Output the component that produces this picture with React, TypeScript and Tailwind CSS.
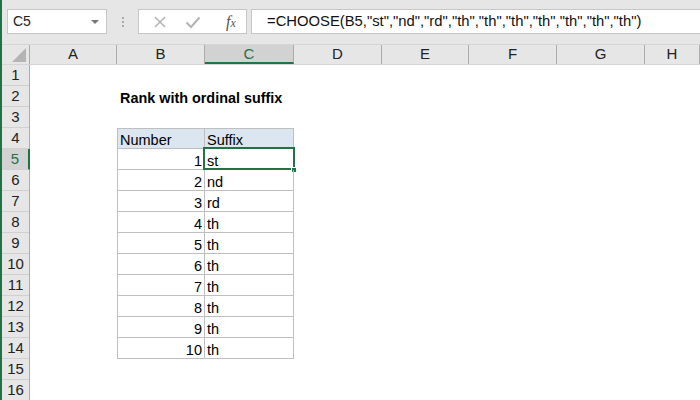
import React from "react";

const cols = [
  { l: "A", w: 87 },
  { l: "B", w: 88 },
  { l: "C", w: 89 },
  { l: "D", w: 88 },
  { l: "E", w: 87 },
  { l: "F", w: 88 },
  { l: "G", w: 88 },
  { l: "H", w: 55 },
];

const suffixes = ["st", "nd", "rd", "th", "th", "th", "th", "th", "th", "th"];

function Cell({ row, col }: { row: number; col: number }) {
  const inTable = row >= 4 && row <= 14 && (col === 1 || col === 2);
  const isHeader = row === 4 && inTable;
  let cls = "relative h-[21px] flex items-end pb-[1px] text-[14.5px] text-black leading-none";
  if (inTable) {
    cls += " border-b border-r border-[#bfbfbf]";
    if (col === 1) cls += " border-l";
    if (row === 4) cls += " border-t";
  }
  if (isHeader) cls += " bg-[#dce6f1]";
  let content: React.ReactNode = null;
  if (row === 2 && col === 1) {
    content = (
      <span className="absolute left-[3px] bottom-[2px] whitespace-nowrap font-bold text-[14.4px]">
        Rank with ordinal suffix
      </span>
    );
  } else if (isHeader) {
    content = <span className="pl-[2px]">{col === 1 ? "Number" : "Suffix"}</span>;
  } else if (inTable && col === 1) {
    content = <span className="w-full text-right pr-[2px]">{row - 4}</span>;
  } else if (inTable && col === 2) {
    content = <span className="pl-[2px]">{suffixes[row - 5]}</span>;
  }
  return (
    <div className={cls}>
      {content}
      {row === 5 && col === 2 && (
        <>
          <div className="absolute left-[-2px] top-[-2px] right-[-2px] bottom-[-1px] border-2 border-[#217346]" />
          <div className="absolute right-[-4px] bottom-[-4px] w-[6px] h-[6px] bg-[#217346] border border-white" />
        </>
      )}
    </div>
  );
}

export default function App() {
  const rows = Array.from({ length: 16 }, (_, i) => i + 1);
  return (
    <div
      className="w-[700px] h-[400px] overflow-hidden bg-white relative border-l-2 border-[#217346]"
      style={{ fontFamily: '"Liberation Sans", Arial, sans-serif' }}
    >
      {/* toolbar */}
      <div className="h-[44px] bg-[#e6e6e6] flex items-start pt-[9px] pl-[5px]">
        <div className="w-[100px] h-[25px] bg-white border border-[#c6c6c6] flex items-center justify-between px-[5px]">
          <span className="text-[14px] text-[#222]">C5</span>
          <svg width="10" height="6" viewBox="0 0 10 6" className="mr-[1px]">
            <path d="M1 1 L9 1 L5 5 Z" fill="#777" />
          </svg>
        </div>
        <div className="w-[31px] h-[25px] flex flex-col items-center justify-center gap-[2px]">
          <div className="w-[2px] h-[2px] bg-[#aaa]" />
          <div className="w-[2px] h-[2px] bg-[#aaa]" />
          <div className="w-[2px] h-[2px] bg-[#aaa]" />
        </div>
        <div className="w-[109px] h-[25px] bg-white border border-[#c6c6c6] flex items-center">
          <svg width="14" height="14" viewBox="0 0 14 14" className="ml-[14px]">
            <path d="M2 2 L12 12 M12 2 L2 12" stroke="#b3b3b3" strokeWidth="1.5" />
          </svg>
          <svg width="16" height="14" viewBox="0 0 16 14" className="ml-[18px]">
            <path d="M1.5 7.5 L6 12 L14.5 2.5" stroke="#b3b3b3" strokeWidth="2" fill="none" />
          </svg>
          <span
            className="ml-[25px] text-[16px] italic text-[#555]"
            style={{ fontFamily: '"Liberation Serif", serif' }}
          >
            f<span className="text-[12px]">x</span>
          </span>
        </div>
        <div className="ml-[4px] flex-1 h-[25px] bg-white border border-[#c6c6c6] border-r-0 flex items-center pl-[15px]">
          <span className="text-[14.8px] text-[#111] whitespace-nowrap">
            =CHOOSE(B5,"st","nd","rd","th","th","th","th","th","th","th")
          </span>
        </div>
      </div>
      {/* column header row */}
      <div className="flex h-[21px] bg-[#e6e6e6] border-t border-[#d5d5d5] border-b border-[#ababab]">
        <div className="w-[28px] h-full relative border-r border-[#ababab]">
          <svg width="14" height="14" viewBox="0 0 14 14" className="absolute right-[3px] bottom-[2px]">
            <path d="M14 0 L14 14 L0 14 Z" fill="#b4b4b4" />
          </svg>
        </div>
        {cols.map((c) => (
          <div
            key={c.l}
            style={{ width: c.w }}
            className={
              "h-full flex items-center justify-center text-[15px] shrink-0 " +
              (c.l === "C"
                ? "bg-[#d2d2d2] text-[#217346] border-b-2 border-[#217346] border-r border-r-[#ababab]"
                : "text-[#222] border-r border-[#ababab]")
            }
          >
            <span className={c.l === "C" ? "mt-[2px]" : ""}>{c.l}</span>
          </div>
        ))}
      </div>
      {/* grid */}
      <div className="flex">
        <div className="w-[28px] shrink-0 bg-[#e6e6e6] border-r border-[#ababab]">
          {rows.map((r) => (
            <div
              key={r}
              className={
                "h-[21px] flex items-center justify-center text-[15px] border-b border-[#d0d0d0] " +
                (r === 5 ? "bg-[#d2d2d2] text-[#217346] border-r-2 border-r-[#217346] -mr-[1px]" : "text-[#222]")
              }
            >
              {r}
            </div>
          ))}
        </div>
        <div className="grid" style={{ gridTemplateColumns: cols.map((c) => c.w + "px").join(" ") }}>
          {rows.map((r) =>
            cols.map((c, ci) => <Cell key={r + c.l} row={r} col={ci} />)
          )}
        </div>
      </div>
    </div>
  );
}
